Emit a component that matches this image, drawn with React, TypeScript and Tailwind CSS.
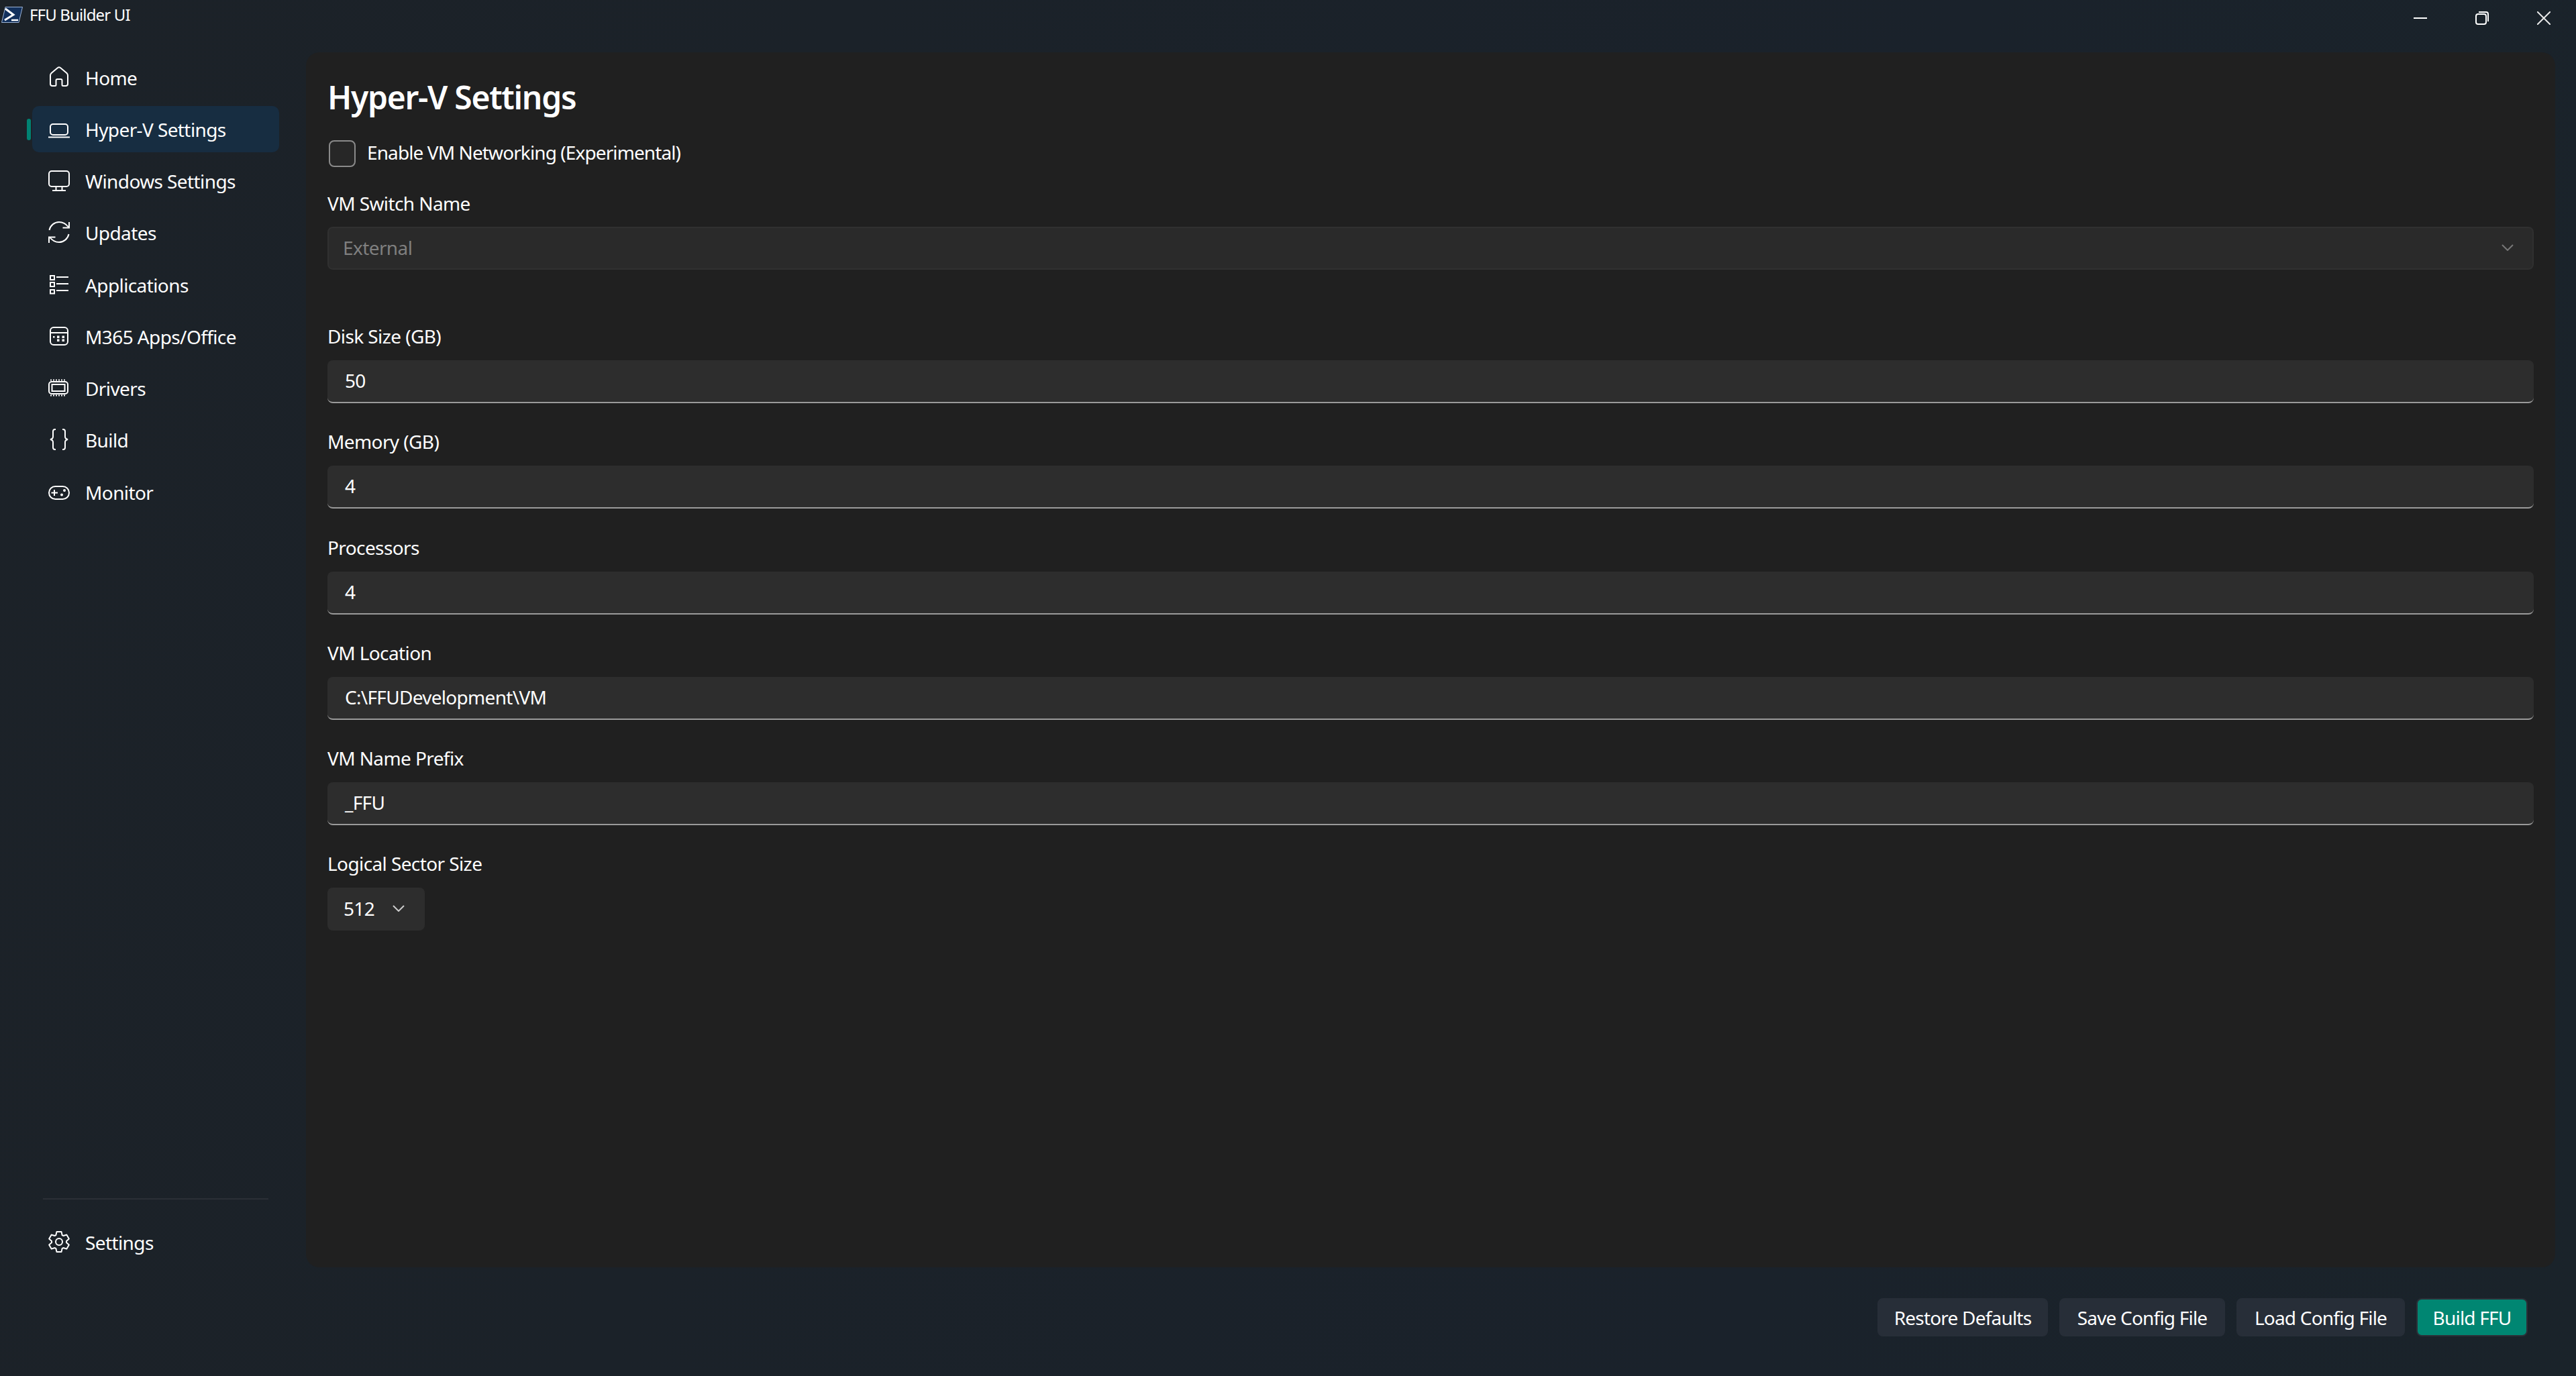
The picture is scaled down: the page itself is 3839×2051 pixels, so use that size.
import type { ReactNode } from "react";

const font = "[font-family:'Noto_Sans','Open_Sans',sans-serif]";

// six-tooth gear outline, centred on the 36px icon box
function gearPath() {
  const pts: string[] = [];
  for (let i = 0; i < 6; i++) {
    const a = -90 + i * 60;
    for (const [off, r] of [[-25, 11], [-13, 15.5], [13, 15.5], [25, 11]]) {
      const t = ((a + off) * Math.PI) / 180;
      pts.push(`${(18 + r * Math.cos(t)).toFixed(2)} ${(17 + r * Math.sin(t)).toFixed(2)}`);
    }
  }
  return `M${pts.join(" L")} Z`;
}

const icons: Record<string, ReactNode> = {
  home: (
    <path d="M16 3 Q18 1.6 20 3 L29.5 11 Q31 12.4 31 14.5 V27 Q31 30 28 30 H24 Q22.5 30 22.5 28.5 V22 Q22.5 20 20.5 20 H15.5 Q13.5 20 13.5 22 V28.5 Q13.5 30 12 30 H8 Q5 30 5 27 V14.5 Q5 12.4 6.5 11 Z" />
  ),
  laptop: (
    <>
      <rect x="5" y="10" width="26" height="16" rx="4" />
      <path d="M2 29.5 H34" />
    </>
  ),
  monitor: (
    <>
      <rect x="3" y="3" width="30" height="23" rx="4" />
      <path d="M13.5 26 V32 M22.5 26 V32 M8 32 H28" />
    </>
  ),
  sync: (
    <>
      <path d="M3.5 14 C5 7 11 2 18 2 C24 2 29 5.5 32 9.5" />
      <path d="M33 2 V10.5 H23.5" />
      <path d="M32.5 20 C31 27 25 32 18 32 C12 32 7 28.5 4 24.5" />
      <path d="M3 33 V24.5 H12.5" />
    </>
  ),
  list: (
    <>
      <rect x="5" y="4" width="6" height="6" />
      <rect x="5" y="14" width="6" height="6" />
      <rect x="5" y="25" width="6" height="5.5" />
      <path d="M14 6 H32 M14 16 H32 M14 26 H32" />
    </>
  ),
  calendar: (
    <>
      <rect x="5" y="4" width="26" height="26" rx="5" />
      <path d="M5 12 H31" />
      <g fill="white" stroke="none">
        <rect x="9" y="17" width="2.5" height="2.5" />
        <rect x="15" y="16.5" width="3.5" height="3.5" />
        <rect x="22.5" y="16.5" width="3.5" height="3.5" />
        <rect x="15" y="21.5" width="3.5" height="3.5" />
        <rect x="22.5" y="21.5" width="3.5" height="3.5" />
      </g>
    </>
  ),
  chip: (
    <>
      <rect x="3" y="8" width="28" height="18" rx="4" />
      <rect x="7.5" y="12" width="19" height="10" />
      <path d="M5 5.5 H29 M5 28.5 H29" strokeDasharray="2 2" />
    </>
  ),
  braces: (
    <>
      <path d="M13 2 H12 Q9 2 9 5 V13 Q9 16 5 17 Q9 18 9 21 V29 Q9 32 12 32 H13" />
      <path d="M23 2 H24 Q27 2 27 5 V13 Q27 16 31 17 Q27 18 27 21 V29 Q27 32 24 32 H23" />
    </>
  ),
  gamepad: (
    <>
      <rect x="3" y="9" width="30" height="19" rx="9.5" />
      <path d="M6.5 18.5 H16 M11 14 V23" />
      <circle cx="26" cy="15" r="2" fill="white" stroke="none" />
      <circle cx="22" cy="21.5" r="2" fill="white" stroke="none" />
    </>
  ),
  gear: (
    <>
      <path d={gearPath()} strokeLinejoin="round" />
      <circle cx="18" cy="17" r="5" />
    </>
  ),
};

const navItems = [
  { label: "Home", icon: "home" },
  { label: "Hyper-V Settings", icon: "laptop", active: true },
  { label: "Windows Settings", icon: "monitor" },
  { label: "Updates", icon: "sync" },
  { label: "Applications", icon: "list" },
  { label: "M365 Apps/Office", icon: "calendar" },
  { label: "Drivers", icon: "chip" },
  { label: "Build", icon: "braces" },
  { label: "Monitor", icon: "gamepad" },
];

function NavItem({ label, icon, active }: { label: string; icon: string; active?: boolean }) {
  return (
    <div className={`relative flex h-[69px] items-center gap-[21px] rounded-[10px] pl-[22px] text-[28px] text-white ${active ? "bg-[#172d41]" : ""}`}>
      {active && <span className="absolute -left-[8px] top-[19px] h-[32px] w-[6px] rounded-full bg-[#008272]" />}
      <svg width="36" height="36" viewBox="0 0 36 36" fill="none" stroke="white" strokeWidth="2" className="shrink-0">
        {icons[icon]}
      </svg>
      <span className="tracking-[-0.6px]">{label}</span>
    </div>
  );
}

function Chevron({ color }: { color: string }) {
  return (
    <svg width="18" height="10" viewBox="0 0 18 10" fill="none" stroke={color} strokeWidth="2" className="shrink-0">
      <path d="M1 1 L9 9 L17 1" />
    </svg>
  );
}

function Label({ children }: { children: ReactNode }) {
  return <div className="h-[32px] text-[28px] leading-[27px] tracking-[-0.6px] text-white">{children}</div>;
}

function Field({ label, children }: { label: string; children: ReactNode }) {
  return (
    <div className="flex flex-col gap-[17px]">
      <Label>{label}</Label>
      {children}
    </div>
  );
}

function TextField({ label, value }: { label: string; value: string }) {
  return (
    <Field label={label}>
      <div className="flex h-[64px] items-center rounded-[8px] border-b-2 border-[#9a9a9a] bg-[#2d2d2d] pb-[2px] pl-[26px] text-[28px] tracking-[-0.7px] text-white">
        {value}
      </div>
    </Field>
  );
}

function FooterButton({ label, width, primary }: { label: string; width: string; primary?: boolean }) {
  return (
    <div className={`flex h-[57px] items-center justify-center rounded-[8px] border-2 text-[28px] tracking-[-0.8px] text-white ${width} ${primary ? "border-[#2b3038] bg-[#008672]" : "border-[#272e38] bg-[#272e38]"}`}>
      {label}
    </div>
  );
}

export default function App() {
  return (
    <div className={`flex h-[2051px] w-[3839px] flex-col overflow-hidden bg-[linear-gradient(100deg,#1c2228_0%,#1b2229_30%,#1a222b_70%,#1a232a_100%)] ${font}`}>
      <header className="flex h-[78px] shrink-0 items-start">
        <div className="flex h-[44px] items-center pl-[2px]">
          <svg width="32" height="24" viewBox="0 0 32 24" className="shrink-0">
            <path d="M6 .5 H31.5 L26 23.5 H.5 Z" fill="#12305c" stroke="#9db4d6" strokeWidth="1" />
            <path d="M6 3 L18 12 L5 20" fill="none" stroke="white" strokeWidth="3" />
            <path d="M15 20 H25" stroke="white" strokeWidth="2.5" />
          </svg>
          <span className="ml-[10px] text-[24px] tracking-[-0.85px] text-white">FFU Builder UI</span>
        </div>
        <div className="ml-auto flex h-[54px] items-center gap-[72px] pr-[38px]">
          <svg width="20" height="20" viewBox="0 0 20 20" stroke="white" strokeWidth="2"><path d="M0 10 H20" /></svg>
          <svg width="20" height="20" viewBox="0 0 20 20" fill="none" stroke="white" strokeWidth="2">
            <rect x="1" y="4" width="15" height="15" rx="3" />
            <path d="M5 1 H16 Q19 1 19 4 V15" />
          </svg>
          <svg width="20" height="20" viewBox="0 0 20 20" stroke="#e8e8e8" strokeWidth="2"><path d="M0 0 L20 20 M20 0 L0 20" /></svg>
        </div>
      </header>

      <div className="flex min-h-0 flex-1">
        <aside className="flex w-[456px] shrink-0 flex-col pb-[165px] pl-[48px] pr-[40px] pt-[3px]">
          <nav className="flex flex-col gap-[8.25px]">
            {navItems.map((item) => (
              <NavItem key={item.label} {...item} />
            ))}
          </nav>
          <div className="mb-[29px] ml-[16px] mt-auto mr-[16px] h-[2px] bg-[#2b2f36]" />
          <NavItem label="Settings" icon="gear" />
        </aside>

        <div className="flex min-w-0 flex-1 flex-col">
          <main className="mr-[31px] flex-1 rounded-[20px] bg-[#202020] px-[32px] pt-[31px]">
            <h1 className="h-[72px] text-[48px] leading-[72px] font-semibold tracking-[-1.3px] text-white">Hyper-V Settings</h1>
            <div className="mt-[28px] flex h-[40px] items-center gap-[17px] pl-[2px]">
              <span className="h-[40px] w-[40px] rounded-[8px] border-2 border-[#8a8a8a] bg-[#272727]" />
              <span className="mb-[4px] text-[28px] leading-[32px] tracking-[-0.9px] text-white">Enable VM Networking (Experimental)</span>
            </div>
            <div className="mt-[41px]">
              <Label>VM Switch Name</Label>
              <div className="mt-[16px] flex h-[64px] items-center justify-between rounded-[8px] border-2 border-[#303030] bg-[#2a2a2a] pb-[2px] pl-[21px] pr-[28px] text-[28px] tracking-[-0.6px] text-[#7f7f7f]">
                External
                <Chevron color="#777777" />
              </div>
            </div>
            <div className="mt-[86px] flex flex-col gap-[44.25px]">
              <TextField label="Disk Size (GB)" value="50" />
              <TextField label="Memory (GB)" value="4" />
              <TextField label="Processors" value="4" />
              <TextField label="VM Location" value="C:\FFUDevelopment\VM" />
              <TextField label="VM Name Prefix" value="_FFU" />
              <Field label="Logical Sector Size">
                <div className="flex h-[64px] w-[145px] items-center justify-between rounded-[8px] bg-[#2d2d2d] pb-[2px] pl-[24px] pr-[30px] text-[28px] tracking-[-0.7px] text-white">
                  512
                  <Chevron color="#cccccc" />
                </div>
              </Field>
            </div>
          </main>
          <footer className="flex h-[162px] shrink-0 items-start justify-end gap-[17px] pr-[72px] pt-[46px]">
            <FooterButton label="Restore Defaults" width="w-[254px]" />
            <FooterButton label="Save Config File" width="w-[247px]" />
            <FooterButton label="Load Config File" width="w-[251px]" />
            <FooterButton label="Build FFU" width="w-[166px]" primary />
          </footer>
        </div>
      </div>
    </div>
  );
}
